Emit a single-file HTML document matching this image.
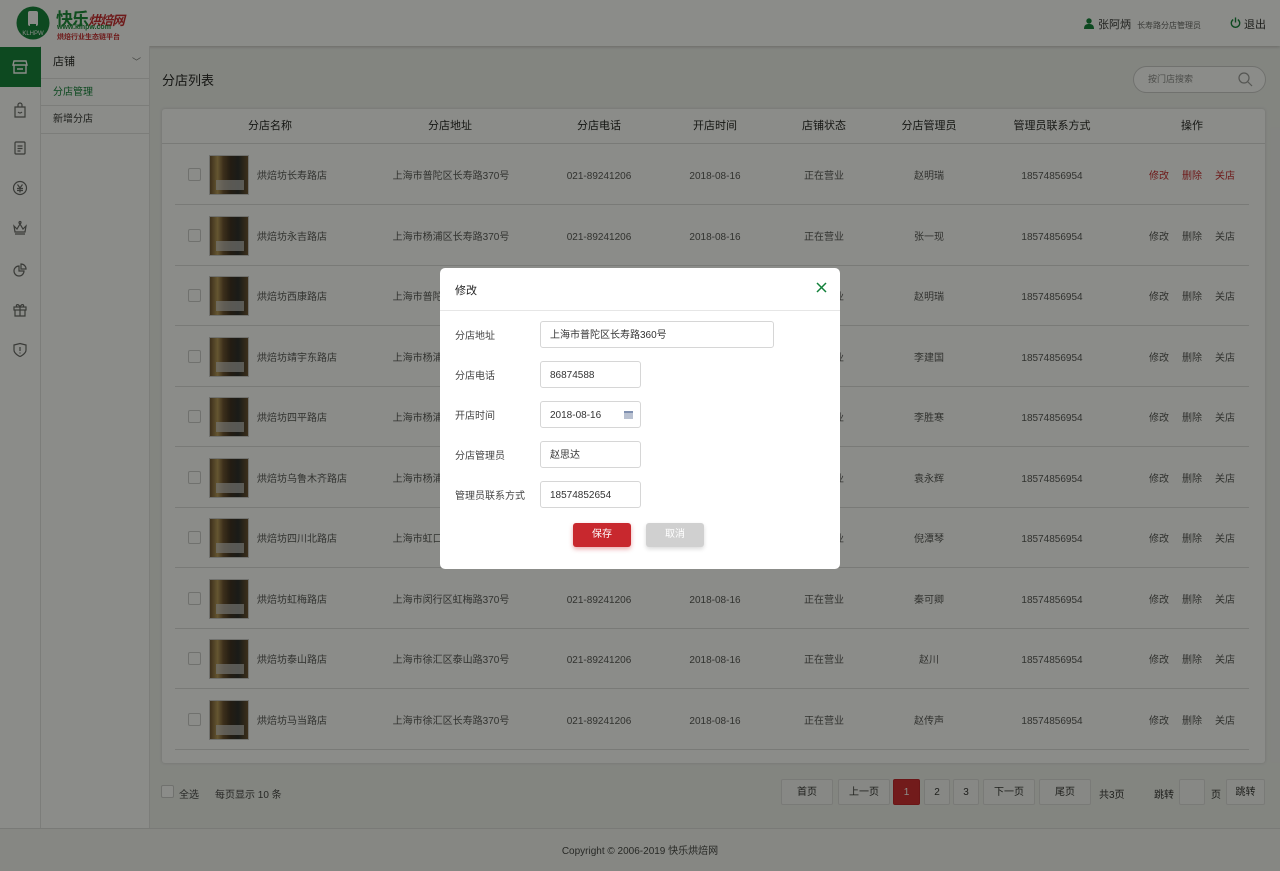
<!DOCTYPE html>
<html style="overflow:hidden;height:871px"><head><meta charset="utf-8"><style>
*{margin:0;padding:0;box-sizing:border-box}
body{width:1280px;height:871px;position:relative;overflow:hidden;font-family:"Liberation Sans","Noto Sans CJK SC",sans-serif;font-size:10px;color:#555;background:#f0f1ef}
.a{position:absolute}
.hdr{left:0;top:0;width:1280px;height:46px;background:#fff;box-shadow:0 1px 3px rgba(0,0,0,.2)}
.side1{left:0;top:46px;width:41px;height:782px;background:#fff;border-right:1px solid #e2e2e2}
.side2{left:41px;top:46px;width:109px;height:782px;background:#fff;border-right:1px solid #e2e2e2}
.ico{position:absolute;left:12px;width:16px;height:16px}
.card{left:162px;top:109px;width:1103px;height:654px;background:#fff;border-radius:3px;box-shadow:0 0 3px rgba(0,0,0,.15)}
.th{position:absolute;top:0;height:34px;line-height:34px;font-size:11px;color:#222;transform:translateX(-50%);white-space:nowrap}
.row{position:absolute;left:13px;width:1074px;height:60px;border-bottom:1px solid #ddd}
.c{position:absolute;top:0;line-height:60px;transform:translateX(-50%);white-space:nowrap;color:#555}
.cb{position:absolute;width:13px;height:13px;border:1px solid #ccc;border-radius:2px;background:#fff}
.img{position:absolute;left:34px;top:10px;width:40px;height:40px;background:linear-gradient(90deg,#6b5030 0,#b89a5a 20%,#6b5030 35%,#3a2c20 55%,#2b2b2b 75%,#6b5030 100%);border:1px solid #ccc}
.img:after{content:"";position:absolute;left:6px;bottom:4px;width:28px;height:10px;background:#cfcfcf;opacity:.7}
.pg{position:absolute;top:779px;height:26px;line-height:26px;text-align:center;border:1px solid #ddd;background:#f7f7f7;border-radius:2px;color:#333}
.ov{left:0;top:0;width:1280px;height:871px;background:rgba(8,10,5,.47)}
.dlg{left:440px;top:268px;width:400px;height:301px;background:#fff;border-radius:5px}
.lbl{position:absolute;left:15px;color:#444;font-size:10px}
.inp{position:absolute;left:100px;height:27px;border:1px solid #d6d6d6;border-radius:3px;padding-left:9px;line-height:27px;color:#333;font-size:10px}
</style></head><body>
<div class="a hdr">
 <svg class="a" style="left:16px;top:6px" width="34" height="34" viewBox="0 0 34 34"><circle cx="17" cy="17" r="16.5" fill="#12803a"/><rect x="12" y="5" width="10" height="15" rx="2" fill="#fff"/><rect x="14" y="18" width="6" height="3" fill="#12803a"/><text x="17" y="29" font-size="6" fill="#fff" text-anchor="middle" font-family="Liberation Sans">KLHPW</text></svg>
 <div class="a" style="left:56px;top:5px;font-size:17px;font-weight:bold;color:#1a8a3a;letter-spacing:-1px">快乐<span style="font-size:13px;color:#c8282e;font-style:italic">烘焙网</span></div>
 <div class="a" style="left:57px;top:24px;font-size:7px;color:#1a8a3a;font-weight:bold">www.klhpw.com</div>
 <div class="a" style="left:57px;top:32px;font-size:7px;color:#c8282e;font-weight:bold">烘焙行业生态链平台</div>
 <svg class="a" style="left:1084px;top:18px" width="10" height="11" viewBox="0 0 10 11"><circle cx="5" cy="3" r="2.7" fill="#12803a"/><path d="M0 11c0-4 2-5 5-5s5 1 5 5z" fill="#12803a"/></svg>
 <div class="a" style="left:1098px;top:16px;font-size:11px;color:#333">张阿炳 <span style="font-size:8px;color:#666;margin-left:3px">长寿路分店管理员</span></div>
 <svg class="a" style="left:1230px;top:17px" width="11" height="11" viewBox="0 0 12 12"><path d="M3.5 2.8A4.6 4.6 0 1 0 8.5 2.8" fill="none" stroke="#12803a" stroke-width="1.5"/><path d="M6 0.5V6" stroke="#12803a" stroke-width="1.5"/></svg>
 <div class="a" style="left:1244px;top:16px;font-size:11px;color:#333">退出</div>
</div>
<div class="a side1">
 <div class="a" style="left:0;top:1px;width:41px;height:40px;background:#12803a"></div>
 <svg class="ico" style="top:13px" viewBox="0 0 16 16" fill="none" stroke="#fff" stroke-width="1.4"><path d="M2 2h12l1 4H1z"/><path d="M2 6v8h12V6M5 10h6"/></svg>
 <svg class="ico" style="top:56px" viewBox="0 0 16 16" fill="none" stroke="#666" stroke-width="1.2"><path d="M3 5h10v10H3zM6 5V3a2 2 0 0 1 4 0v2M6 10q2 2 4 0"/></svg>
 <svg class="ico" style="top:94px" viewBox="0 0 16 16" fill="none" stroke="#666" stroke-width="1.2"><rect x="3" y="2" width="10" height="12" rx="1"/><path d="M5.5 6h5M5.5 8.5h5M5.5 11h3"/></svg>
 <svg class="ico" style="top:134px" viewBox="0 0 16 16" fill="none" stroke="#666" stroke-width="1.2"><circle cx="8" cy="8" r="6.5"/><path d="M5.5 4.5L8 8l2.5-3.5M5 8.5h6M5 10.5h6M8 8v4.5"/></svg>
 <svg class="ico" style="top:174px" viewBox="0 0 16 16" fill="none" stroke="#666" stroke-width="1.2"><path d="M2 6l3 3 3-5 3 5 3-3-1 6H3zM3 14h10"/><circle cx="8" cy="2.5" r="1"/></svg>
 <svg class="ico" style="top:216px" viewBox="0 0 16 16" fill="none" stroke="#666" stroke-width="1.2"><path d="M7 4a5 5 0 1 0 5 5H7z"/><path d="M9 2v5h5a5 5 0 0 0-5-5z"/></svg>
 <svg class="ico" style="top:256px" viewBox="0 0 16 16" fill="none" stroke="#666" stroke-width="1.2"><rect x="2" y="5" width="12" height="3"/><path d="M3 8v6h10V8M8 5v9M8 5C6 1 3 3 5 5M8 5c2-4 5-2 3 0"/></svg>
 <svg class="ico" style="top:296px" viewBox="0 0 16 16" fill="none" stroke="#666" stroke-width="1.2"><path d="M2 3l6-1.5L14 3v5c0 4-6 6.5-6 6.5S2 12 2 8z"/><path d="M8 5v4M8 10.5v1"/></svg>
</div>
<div class="a side2">
 <div class="a" style="left:0;top:0;width:108px;height:33px;border-bottom:1px solid #e2e2e2;line-height:33px;padding-left:12px;font-size:11px;color:#222">店铺<span style="position:absolute;right:8px;font-size:9px;color:#777">﹀</span></div>
 <div class="a" style="left:0;top:33px;width:108px;height:27px;border-bottom:1px solid #e2e2e2;line-height:27px;padding-left:12px;color:#12803a">分店管理</div>
 <div class="a" style="left:0;top:60px;width:108px;height:28px;border-bottom:1px solid #e2e2e2;line-height:28px;padding-left:12px;color:#333">新增分店</div>
</div>
<div class="a" style="left:162px;top:70px;font-size:13px;color:#222">分店列表</div>
<div class="a" style="left:1133px;top:66px;width:133px;height:27px;border:1px solid #ccc;border-radius:14px;background:#fff;padding-left:14px;line-height:25px;color:#888;font-size:9px">按门店搜索
 <svg style="position:absolute;right:12px;top:5px" width="15" height="15" viewBox="0 0 15 15" fill="none" stroke="#999" stroke-width="1.2"><circle cx="6" cy="6" r="5"/><path d="M10 10l4 4"/></svg></div>
<div class="a card">
 <div style="position:absolute;left:0;top:34px;width:1103px;border-top:1px solid #ddd"></div>
 <div class="th" style="left:108px">分店名称</div><div class="th" style="left:288px">分店地址</div><div class="th" style="left:437px">分店电话</div><div class="th" style="left:553px">开店时间</div><div class="th" style="left:662px">店铺状态</div><div class="th" style="left:767px">分店管理员</div><div class="th" style="left:890px">管理员联系方式</div><div class="th" style="left:1030px">操作</div>
 <div id="rows"></div>
</div>
<script>
var d=[["烘焙坊长寿路店","上海市普陀区长寿路370号","赵明瑞"],["烘焙坊永吉路店","上海市杨浦区长寿路370号","张一现"],["烘焙坊西康路店","上海市普陀区长寿路370号","赵明瑞"],["烘焙坊靖宇东路店","上海市杨浦区长寿路370号","李建国"],["烘焙坊四平路店","上海市杨浦区长寿路370号","李胜寒"],["烘焙坊乌鲁木齐路店","上海市杨浦区长寿路370号","袁永辉"],["烘焙坊四川北路店","上海市虹口区长寿路370号","倪潭琴"],["烘焙坊虹梅路店","上海市闵行区虹梅路370号","秦可卿"],["烘焙坊泰山路店","上海市徐汇区泰山路370号","赵川"],["烘焙坊马当路店","上海市徐汇区长寿路370号","赵传声"]];
var h="";d.forEach(function(r,i){var t=36+i*60.5,red=i==0?"color:#c8282e":"";
h+='<div class="row" style="top:'+t+'px"><div class="cb" style="left:13px;top:23px"></div><div class="img"></div><div class="c" style="left:82px;transform:none;top:2px">'+r[0]+'</div><div class="c" style="left:276px;top:2px">'+r[1]+'</div><div class="c" style="left:424px;top:2px">021-89241206</div><div class="c" style="left:540px;top:2px">2018-08-16</div><div class="c" style="left:649px;top:2px">正在营业</div><div class="c" style="left:754px;top:2px">'+r[2]+'</div><div class="c" style="left:877px;top:2px">18574856954</div><div class="c" style="left:984px;top:2px;'+red+'">修改</div><div class="c" style="left:1017px;top:2px;'+red+'">删除</div><div class="c" style="left:1050px;top:2px;'+red+'">关店</div></div>';});
document.getElementById("rows").innerHTML=h;
</script>
<div class="a cb" style="left:161px;top:785px"></div>
<div class="a" style="left:179px;top:786px;color:#444">全选</div>
<div class="a" style="left:215px;top:786px;color:#444">每页显示 10 条</div>
<div class="pg" style="left:781px;width:52px">首页</div>
<div class="pg" style="left:838px;width:52px">上一页</div>
<div class="pg" style="left:893px;width:27px;background:#d02a30;border-color:#c02028;color:#fff">1</div>
<div class="pg" style="left:924px;width:26px">2</div>
<div class="pg" style="left:953px;width:26px">3</div>
<div class="pg" style="left:983px;width:52px">下一页</div>
<div class="pg" style="left:1039px;width:52px">尾页</div>
<div class="a" style="left:1099px;top:786px;color:#333">共3页</div>
<div class="a" style="left:1154px;top:786px;color:#333">跳转</div>
<div class="pg" style="left:1179px;width:26px"></div>
<div class="a" style="left:1211px;top:786px;color:#333">页</div>
<div class="pg" style="left:1226px;width:39px">跳转</div>
<div class="a" style="left:0;top:828px;width:1280px;height:43px;border-top:1px solid #ddd;background:#f5f6f4;text-align:center;line-height:46px;color:#444">Copyright © 2006-2019 快乐烘焙网</div>
<div class="a ov"></div>
<div class="a dlg">
 <div class="a" style="left:15px;top:14px;font-size:11px;color:#222">修改</div>
 <svg class="a" style="left:376px;top:14px" width="11" height="11" viewBox="0 0 11 11" stroke="#12803a" stroke-width="1.5"><path d="M1 1l9 9M10 1l-9 9"/></svg>
 <div class="a" style="left:0;top:42px;width:400px;border-top:1px solid #e6e6e6"></div>
 <div class="lbl" style="top:59px">分店地址</div><div class="inp" style="top:53px;width:234px">上海市普陀区长寿路360号</div>
 <div class="lbl" style="top:99px">分店电话</div><div class="inp" style="top:93px;width:101px">86874588</div>
 <div class="lbl" style="top:139px">开店时间</div><div class="inp" style="top:133px;width:101px">2018-08-16<span style="position:absolute;right:7px;top:9px;width:9px;height:8px;background:#b8c0d0;border-top:2px solid #8090b0"></span></div>
 <div class="lbl" style="top:179px">分店管理员</div><div class="inp" style="top:173px;width:101px">赵思达</div>
 <div class="lbl" style="top:219px">管理员联系方式</div><div class="inp" style="top:213px;width:101px">18574852654</div>
 <div class="a" style="left:133px;top:255px;width:58px;height:24px;background:#c8282e;border-radius:3px;color:#fff;text-align:center;line-height:24px;box-shadow:0 2px 5px rgba(200,40,46,.4)">保存</div>
 <div class="a" style="left:206px;top:255px;width:58px;height:24px;background:#d0d0d0;border-radius:3px;color:#fff;text-align:center;line-height:24px;box-shadow:0 2px 4px rgba(0,0,0,.15)">取消</div>
</div>
</body></html>
